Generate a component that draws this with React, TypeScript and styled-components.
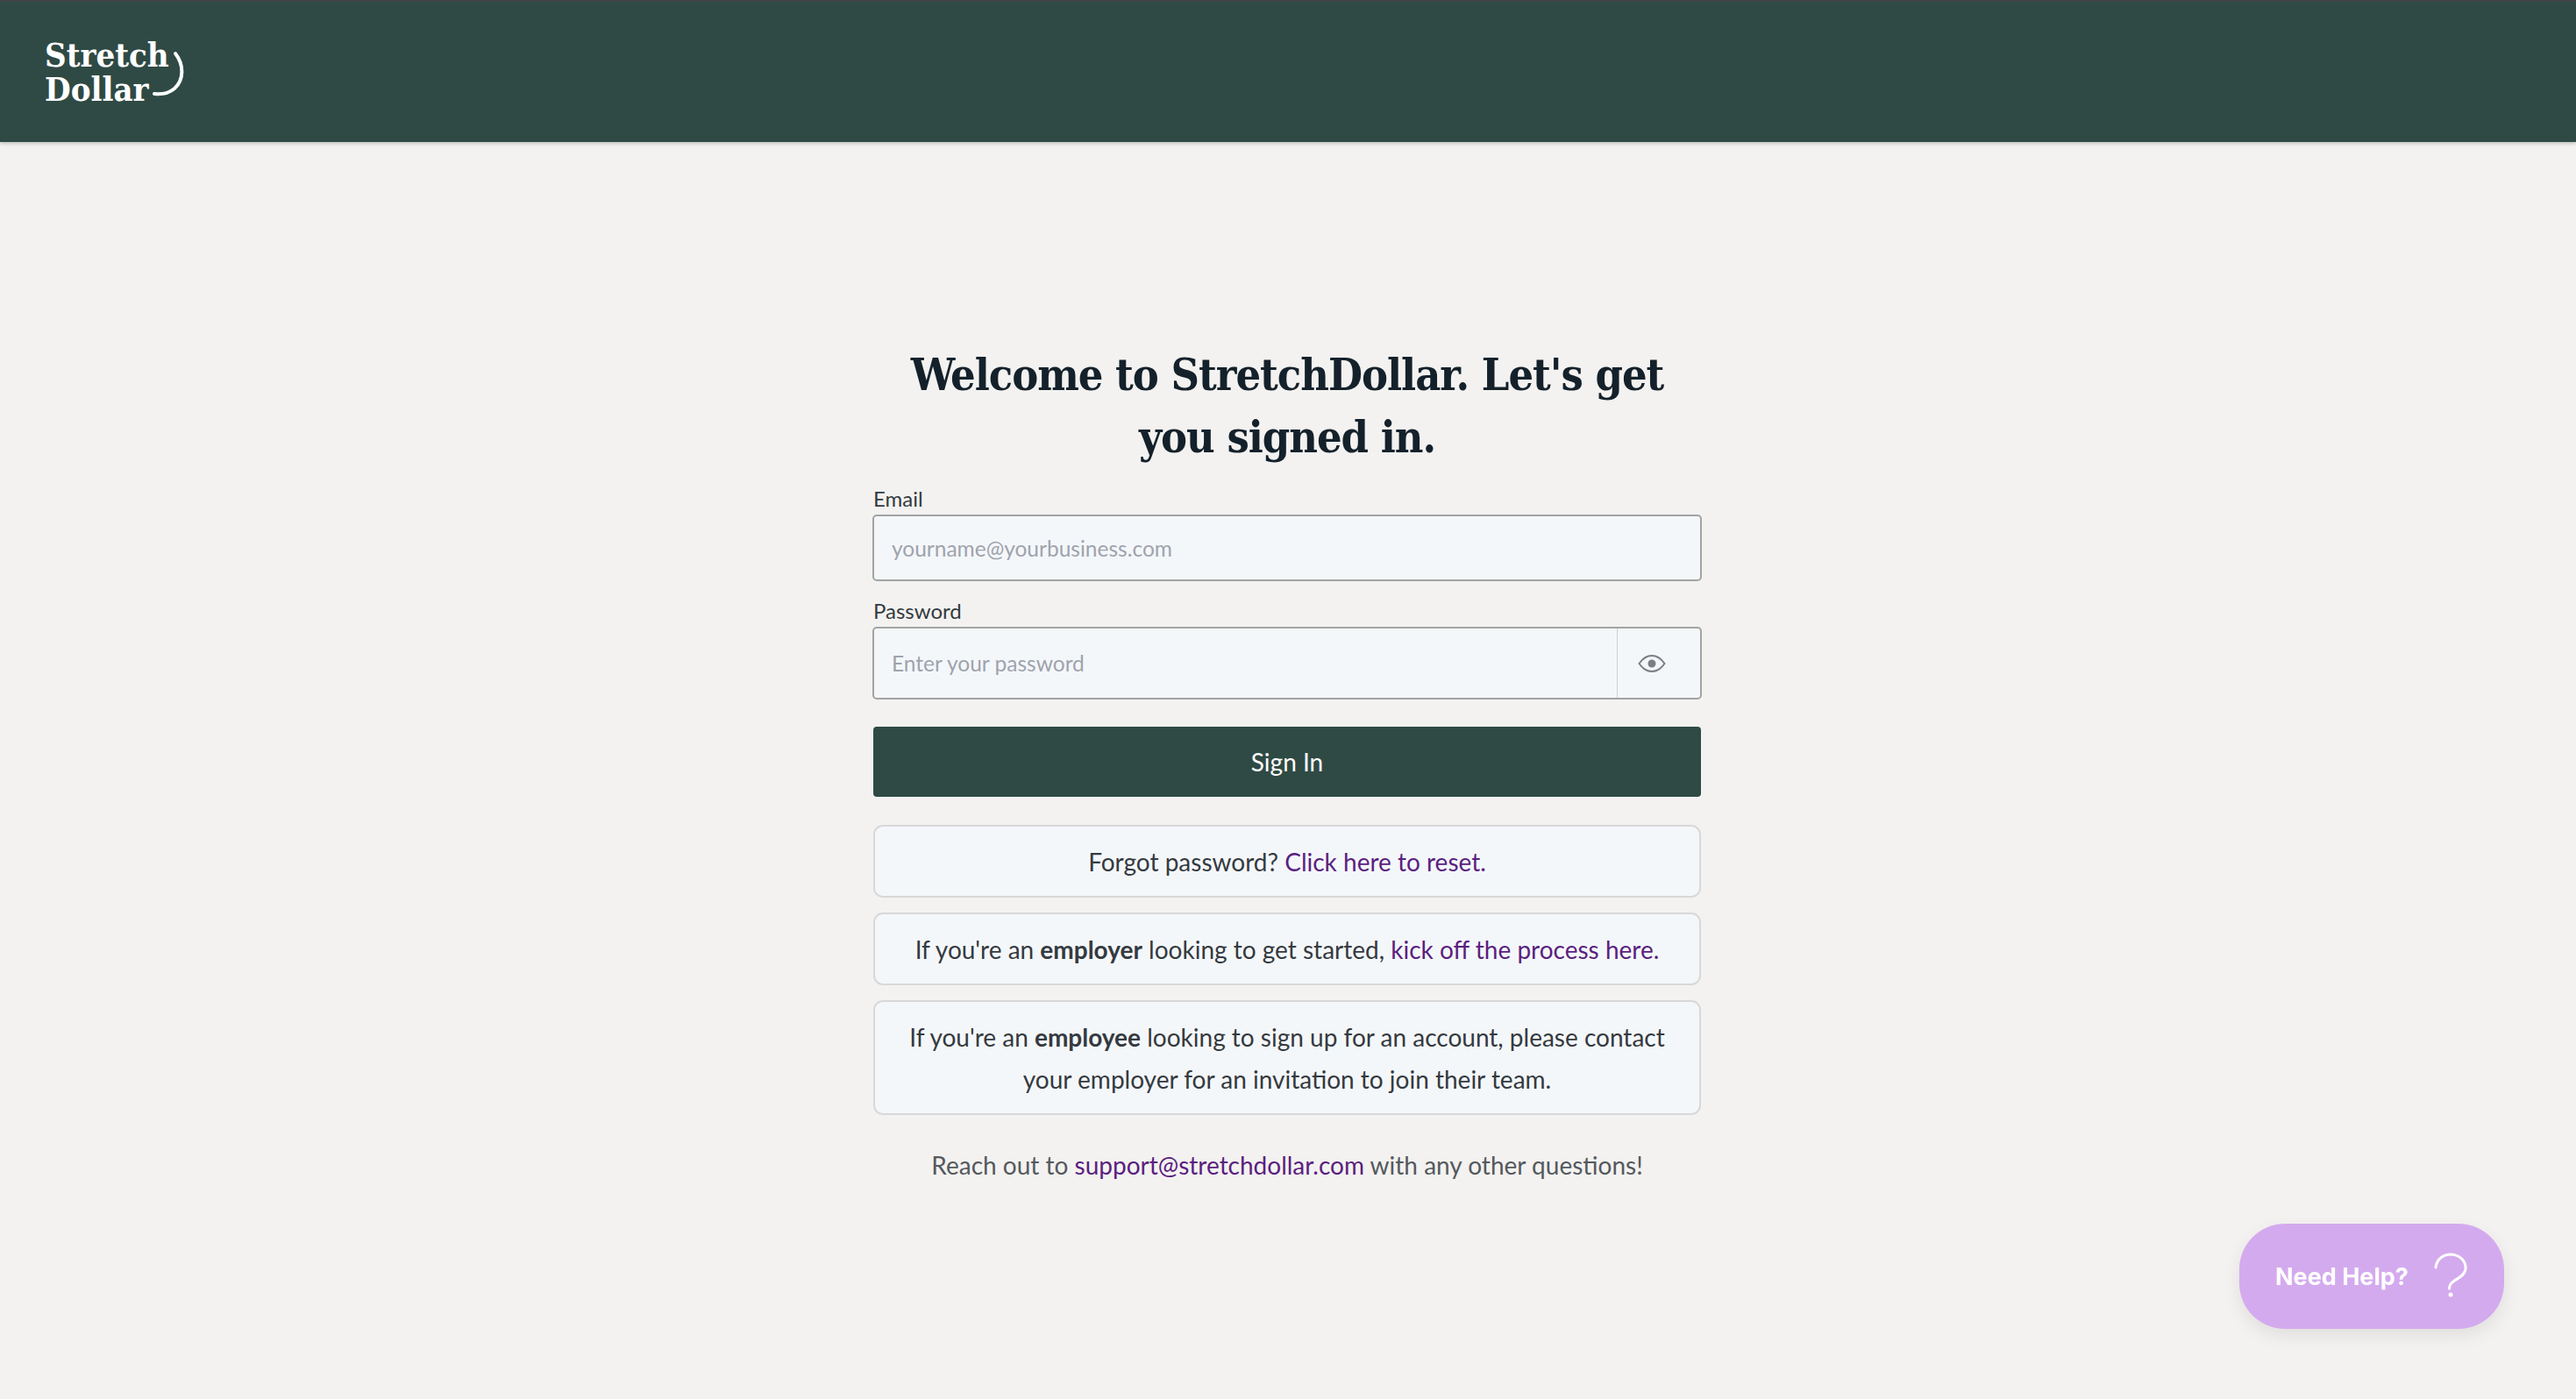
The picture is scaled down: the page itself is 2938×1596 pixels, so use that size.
import styled, { createGlobalStyle } from "styled-components";

const GlobalStyle = createGlobalStyle`
    html, body {
        margin: 0;
        padding: 0;
        background-color: #f3f2f0;
    }
    * {
        box-sizing: border-box;
    }
`

const Page = styled.div`
    min-height: 1596px;
    display: flex;
    flex-direction: column;
    font-family: "Lato", "Liberation Sans", sans-serif;
    color: #343a40;
`

const Header = styled.header`
    height: 162px;
    flex-shrink: 0;
    display: flex;
    align-items: center;
    padding-left: 51px;
    background-color: #2f4a44;
    border-top: 2px solid #3f4444;
    box-shadow: 0 2px 4px rgba(0, 0, 0, 0.2);
`

const Logo = styled.div`
    position: relative;
    margin-top: -1px;
    font-family: "DejaVu Serif", serif;
    font-stretch: condensed;
    font-weight: 700;
    font-size: 38px;
    line-height: 39px;
    color: #ffffff;
`

const LogoLine = styled.div`
    display: block;
`

const LogoArc = styled.svg`
    position: absolute;
    left: 122px;
    top: 15px;
    width: 44px;
    height: 54px;
    fill: none;
    stroke: #ffffff;
    stroke-width: 4;
    stroke-linecap: round;
`

const Main = styled.main`
    width: 946px;
    margin-left: 995px;
    padding-top: 230px;
    display: flex;
    flex-direction: column;
`

const Title = styled.h1`
    margin: 0 0 20px;
    font-family: "DejaVu Serif", serif;
    font-stretch: condensed;
    font-weight: 700;
    font-size: 50px;
    letter-spacing: -1px;
    line-height: 71px;
    text-align: center;
    color: #14212b;
`

const FieldLabel = styled.label`
    display: block;
    font-size: 24px;
    line-height: 30px;
    margin: 0 0 3px 1px;
    color: #343a40;
`

const Field = styled.div<{ $height: number }>`
    display: flex;
    height: ${(props) => props.$height}px;
    margin-bottom: 19px;
    background-color: #f4f7fa;
    border: 2px solid #a3a3a3;
    border-radius: 5px;
    overflow: hidden;
`

const Input = styled.input`
    flex: 1;
    min-width: 0;
    padding: 0 20px;
    border: none;
    outline: none;
    background: transparent;
    font-family: inherit;
    font-size: 24.5px;
    color: #343a40;

    &::placeholder {
        color: #9fa3ad;
        opacity: 1;
    }
`

const EyeButton = styled.div`
    width: 95px;
    display: flex;
    align-items: center;
    padding-left: 23px;
    border-left: 1px solid #cfcfcf;
    color: #7b7f83;
`

const EyeIcon = styled.svg`
    width: 32px;
    height: 20px;
    fill: none;
    stroke: currentColor;
    stroke-width: 2;
`

const SignInButton = styled.button`
    height: 80px;
    margin: 12px 1px 32px;
    border: none;
    border-radius: 4px;
    background-color: #2f4a44;
    color: #ffffff;
    font-family: inherit;
    font-size: 28px;
`

const InfoBox = styled.div`
    margin: 0 1px 17px;
    padding: 15.5px 30px;
    background-color: #f4f7fa;
    border: 2px solid #d8d8d8;
    border-radius: 11px;
    font-size: 28px;
    line-height: 48px;
    text-align: center;
    color: #343a40;

    b {
        font-weight: 700;
    }
`

const TextLink = styled.a`
    color: #5b1f7f;
    text-decoration: none;
`

const Footnote = styled.p`
    margin: 16px 0 0;
    font-size: 28px;
    line-height: 48px;
    text-align: center;
    color: #55595e;
`

const HelpButton = styled.div`
    position: fixed;
    right: 82px;
    bottom: 80px;
    width: 302px;
    height: 120px;
    display: flex;
    align-items: center;
    padding-left: 41px;
    border-radius: 52px;
    background-color: #d4aaee;
    box-shadow: 0 8px 20px rgba(0, 0, 0, 0.08);
    font-family: "Inter", sans-serif;
    font-weight: 700;
    font-size: 27px;
    color: #ffffff;
`

const HelpIcon = styled.svg`
    width: 40px;
    height: 56px;
    margin-left: 28px;
    fill: none;
    stroke: #ffffff;
    stroke-width: 3;
    stroke-linecap: round;
`

function App() {
    return (
        <Page>
            <GlobalStyle />
            <Header>
                <Logo>
                    <LogoLine>Stretch</LogoLine>
                    <LogoLine>Dollar</LogoLine>
                    <LogoArc viewBox="0 0 44 54">
                        <path d="M27 3 C37 16 37 33 26 43 C20 48 11 50 3 49" />
                    </LogoArc>
                </Logo>
            </Header>
            <Main>
                <Title>
                    Welcome to StretchDollar. Let's get
                    <br />
                    you signed in.
                </Title>
                <FieldLabel>Email</FieldLabel>
                <Field $height={76}>
                    <Input placeholder="yourname@yourbusiness.com" />
                </Field>
                <FieldLabel>Password</FieldLabel>
                <Field $height={83}>
                    <Input placeholder="Enter your password" />
                    <EyeButton>
                        <EyeIcon viewBox="0 0 32 20">
                            <path d="M1.500 10 C6 3.500 11 1 16 1 C21 1 26 3.500 30.500 10 C26 16.500 21 19 16 19 C11 19 6 16.500 1.500 10 Z" />
                            <circle cx="16" cy="10" r="4.500" fill="currentColor" stroke="none" />
                        </EyeIcon>
                    </EyeButton>
                </Field>
                <SignInButton>Sign In</SignInButton>
                <InfoBox>
                    Forgot password? <TextLink href="#">Click here to reset.</TextLink>
                </InfoBox>
                <InfoBox>
                    If you're an <b>employer</b> looking to get started,{" "}
                    <TextLink href="#">kick off the process here.</TextLink>
                </InfoBox>
                <InfoBox>
                    If you're an <b>employee</b> looking to sign up for an account, please contact
                    your employer for an invitation to join their team.
                </InfoBox>
                <Footnote>
                    Reach out to <TextLink href="#">support@stretchdollar.com</TextLink> with any other questions!
                </Footnote>
            </Main>
            <HelpButton>
                Need Help?
                <HelpIcon viewBox="0 0 40 56">
                    <path d="M3 18 C4 8 12 3 21 3 C31 4 38 11 37 20 C36 29 24 31 20 37 C19 38.500 18.500 40 18.500 42" />
                    <circle cx="20" cy="49" r="2.500" fill="#ffffff" stroke="none" />
                </HelpIcon>
            </HelpButton>
        </Page>
    );
}

export default App;
